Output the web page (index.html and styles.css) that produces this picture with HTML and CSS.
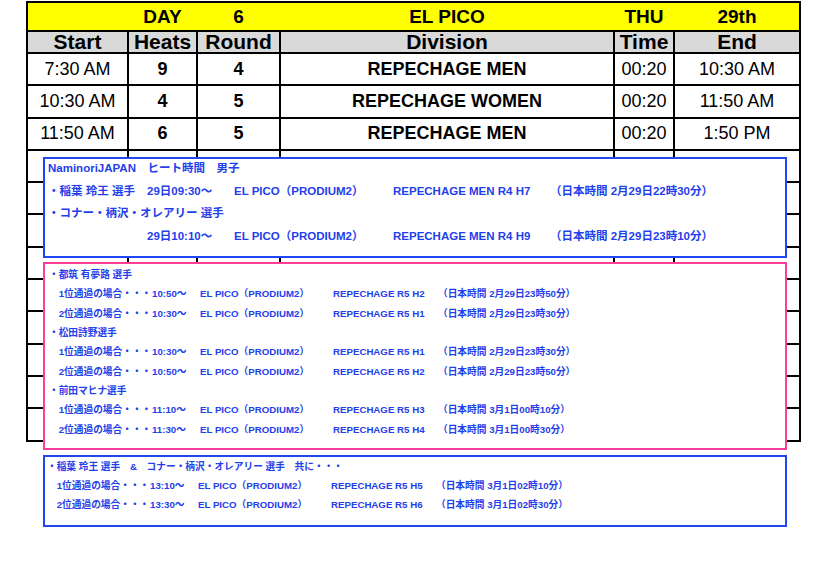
FILE: index.html
```html
<!DOCTYPE html>
<html lang="ja">
<head>
<meta charset="utf-8">
<title>DAY 6 EL PICO</title>
<link rel="stylesheet" href="styles.css">
</head>
<body>
<div class="page">
  <div class="sched">
    <div class="banner">
      <span></span><span>DAY</span><span>6</span><span>EL PICO</span><span>THU</span><span>29th</span>
    </div>
    <div class="hd">Start</div><div class="hd">Heats</div><div class="hd">Round</div><div class="hd">Division</div><div class="hd">Time</div><div class="hd">End</div>

    <div class="c">7:30 AM</div><div class="c b">9</div><div class="c b">4</div><div class="c b">REPECHAGE MEN</div><div class="c">00:20</div><div class="c">10:30 AM</div>
    <div class="c">10:30 AM</div><div class="c b">4</div><div class="c b">5</div><div class="c b">REPECHAGE WOMEN</div><div class="c">00:20</div><div class="c">11:50 AM</div>
    <div class="c">11:50 AM</div><div class="c b">6</div><div class="c b">5</div><div class="c b">REPECHAGE MEN</div><div class="c">00:20</div><div class="c">1:50 PM</div>

    <div class="c"></div><div class="c"></div><div class="c"></div><div class="c"></div><div class="c"></div><div class="c"></div>
    <div class="c"></div><div class="c"></div><div class="c"></div><div class="c"></div><div class="c"></div><div class="c"></div>
    <div class="c"></div><div class="c"></div><div class="c"></div><div class="c"></div><div class="c"></div><div class="c"></div>
    <div class="c"></div><div class="c"></div><div class="c"></div><div class="c"></div><div class="c"></div><div class="c"></div>
    <div class="c"></div><div class="c"></div><div class="c"></div><div class="c"></div><div class="c"></div><div class="c"></div>
    <div class="c"></div><div class="c"></div><div class="c"></div><div class="c"></div><div class="c"></div><div class="c"></div>
    <div class="c"></div><div class="c"></div><div class="c"></div><div class="c"></div><div class="c"></div><div class="c"></div>
    <div class="c"></div><div class="c"></div><div class="c"></div><div class="c"></div><div class="c"></div><div class="c"></div>
    <div class="c"></div><div class="c"></div><div class="c"></div><div class="c"></div><div class="c"></div><div class="c"></div>
  </div>

  <div class="note note-top">
    <div class="line">NaminoriJAPAN　ヒート時間　男子</div>
    <div class="line"><span class="ta">・稲葉 玲王 選手</span><span class="tb">29日09:30～</span><span class="tc">EL PICO（PRODIUM2）</span><span class="td">REPECHAGE MEN R4 H7</span><span>（日本時間 2月29日22時30分）</span></div>
    <div class="line">・コナー・柄沢・オレアリー 選手</div>
    <div class="line"><span class="ta"></span><span class="tb">29日10:10～</span><span class="tc">EL PICO（PRODIUM2）</span><span class="td">REPECHAGE MEN R4 H9</span><span>（日本時間 2月29日23時10分）</span></div>
  </div>

  <div class="note note-pink">
    <div class="line">・都筑 有夢路 選手</div>
    <div class="line"><span class="sa">　1位通過の場合・・・</span><span class="sb">10:50～</span><span class="sc">EL PICO（PRODIUM2）</span><span class="sd">REPECHAGE R5 H2</span><span>（日本時間 2月29日23時50分）</span></div>
    <div class="line"><span class="sa">　2位通過の場合・・・</span><span class="sb">10:30～</span><span class="sc">EL PICO（PRODIUM2）</span><span class="sd">REPECHAGE R5 H1</span><span>（日本時間 2月29日23時30分）</span></div>
    <div class="line">・松田詩野選手</div>
    <div class="line"><span class="sa">　1位通過の場合・・・</span><span class="sb">10:30～</span><span class="sc">EL PICO（PRODIUM2）</span><span class="sd">REPECHAGE R5 H1</span><span>（日本時間 2月29日23時30分）</span></div>
    <div class="line"><span class="sa">　2位通過の場合・・・</span><span class="sb">10:50～</span><span class="sc">EL PICO（PRODIUM2）</span><span class="sd">REPECHAGE R5 H2</span><span>（日本時間 2月29日23時50分）</span></div>
    <div class="line">・前田マヒナ選手</div>
    <div class="line"><span class="sa">　1位通過の場合・・・</span><span class="sb">11:10～</span><span class="sc">EL PICO（PRODIUM2）</span><span class="sd">REPECHAGE R5 H3</span><span>（日本時間 3月1日00時10分）</span></div>
    <div class="line"><span class="sa">　2位通過の場合・・・</span><span class="sb">11:30～</span><span class="sc">EL PICO（PRODIUM2）</span><span class="sd">REPECHAGE R5 H4</span><span>（日本時間 3月1日00時30分）</span></div>
  </div>

  <div class="note note-bottom">
    <div class="line">・稲葉 玲王 選手　&amp;　コナー・柄沢・オレアリー 選手　共に・・・</div>
    <div class="line"><span class="sa">　1位通過の場合・・・</span><span class="sb">13:10～</span><span class="sc">EL PICO（PRODIUM2）</span><span class="sd">REPECHAGE R5 H5</span><span>（日本時間 3月1日02時10分）</span></div>
    <div class="line"><span class="sa">　2位通過の場合・・・</span><span class="sb">13:30～</span><span class="sc">EL PICO（PRODIUM2）</span><span class="sd">REPECHAGE R5 H6</span><span>（日本時間 3月1日02時30分）</span></div>
  </div>
</div>
</body>
</html>
```

FILE: styles.css
```css
body {
  margin: 0;
  background: #fff;
  color: #000;
  font-family: "Liberation Sans", Arial, "Noto Sans CJK JP", sans-serif;
}

.page {
  position: relative;
  padding-top: 1px;
}

.sched {
  display: grid;
  grid-template-columns: 99px 67px 81px 332px 58px 124px;
  grid-template-rows: 27px 20px repeat(12, 30.3px);
  gap: 2px;
  padding: 2px;
  background: #000;
  width: max-content;
  margin-left: 26px;
}

.banner {
  grid-column: 1 / -1;
  display: grid;
  grid-template-columns: 99px 67px 81px 332px 58px 124px;
  column-gap: 2px;
  align-items: center;
  text-align: center;
  background: #ffff00;
  font-weight: bold;
  font-size: 19px;
  line-height: 27px;
}

.hd {
  background: #d9d9d9;
  font-weight: bold;
  font-size: 21px;
  line-height: 20px;
  text-align: center;
  white-space: nowrap;
}

.c {
  background: #fff;
  display: flex;
  align-items: center;
  justify-content: center;
  font-size: 18px;
  white-space: nowrap;
}

.c.b {
  font-weight: bold;
}

.note {
  position: absolute;
  left: 43px;
  box-sizing: border-box;
  width: 744px;
  background: #fff;
  color: #1f40ea;
  font-weight: bold;
  white-space: nowrap;
}

.line {
  display: flex;
}

.line span {
  flex: none;
}

.note-top {
  top: 157px;
  height: 101px;
  border: 2px solid #2246f4;
  padding-left: 3px;
  font-size: 11.5px;
  line-height: 18.6px;
  display: flex;
  flex-direction: column;
  gap: 4px;
}

.ta { width: 99px; }
.tb { width: 87px; }
.tc { width: 159px; }
.td { width: 157px; }

.note-pink {
  top: 262px;
  height: 188px;
  border: 2px solid #ff3d9a;
  padding: 1px 0 0 4px;
  font-size: 9.7px;
  line-height: 19.35px;
}

.note-bottom {
  position: static;
  margin: 13px 0 0 43px;
  height: 72px;
  border: 2px solid #2246f4;
  padding-left: 2px;
  font-size: 9.7px;
  line-height: 19.2px;
}

.sa { width: 103px; }
.sb { width: 48px; }
.sc { width: 133px; }
.sd { width: 105px; }
```
